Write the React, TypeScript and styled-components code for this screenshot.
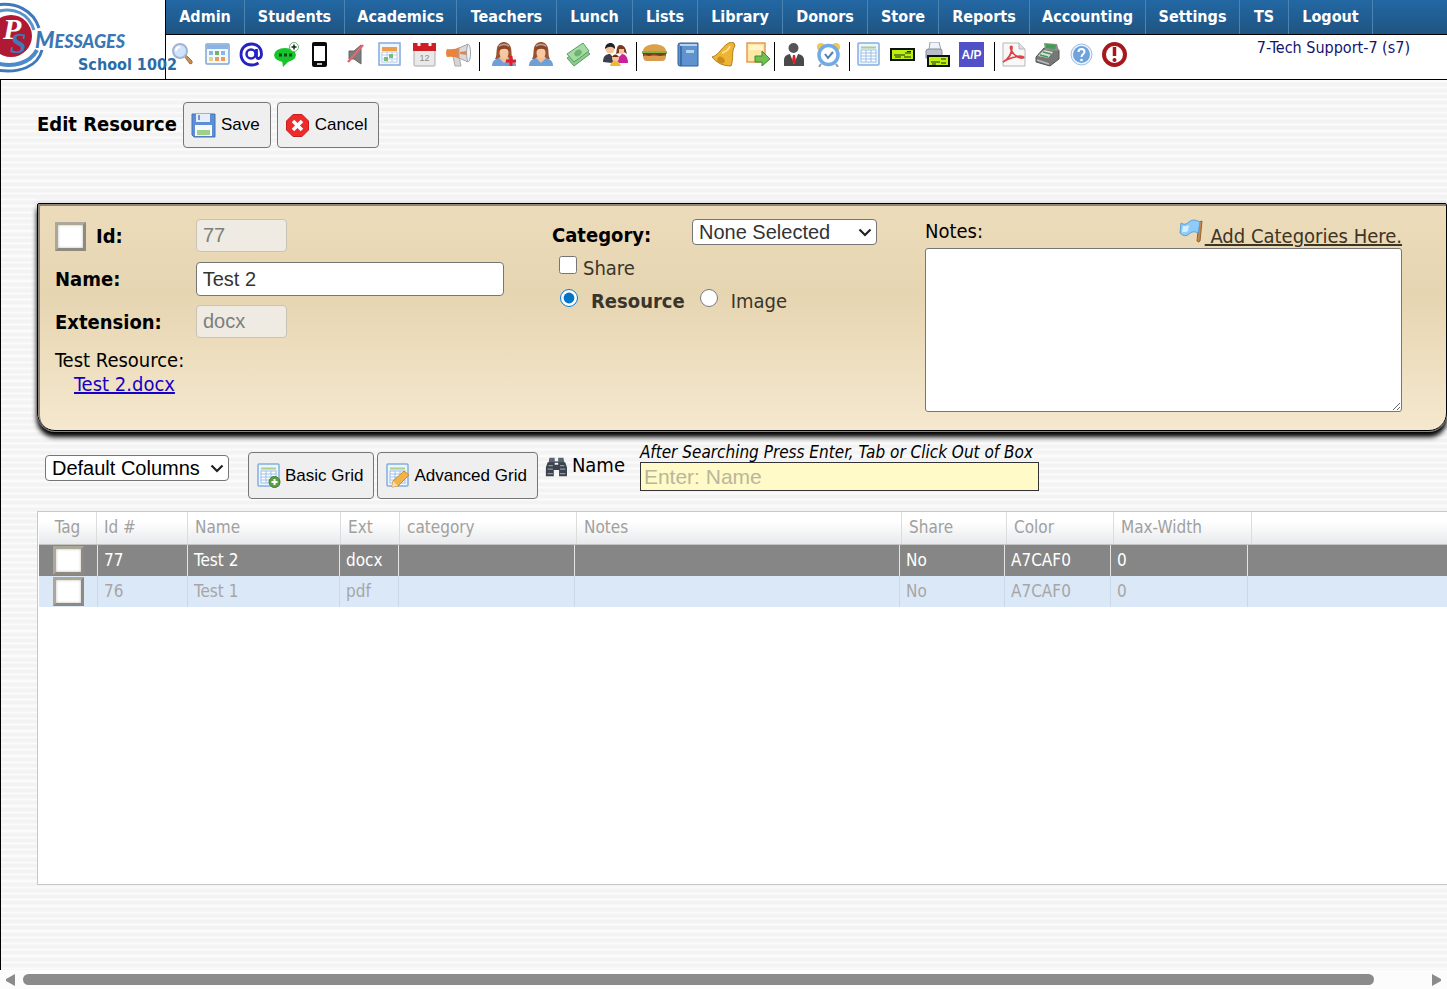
import React from "react";
import styled, { createGlobalStyle, css } from "styled-components";

const tahoma = `Tahoma, "DejaVu Sans Condensed", "DejaVu Sans", sans-serif`;
const arial = `"Liberation Sans", Arial, sans-serif`;

const GlobalStyle = createGlobalStyle`
  *, *::before, *::after { box-sizing: border-box; }
  body { margin: 0; background: #fff; color: #000; font: 20px/24px ${tahoma}; overflow-x: hidden; }
`;

/* ---------- page frame ---------- */

const Page = styled.div`
  display: flex;
  flex-direction: column;
  min-height: 100vh;
`;

const Header = styled.header`
  display: flex;
  height: 80px;
  border-bottom: 1px solid #000;
  background: #fff;
`;

const Brand = styled.div`
  position: relative;
  flex: none;
  width: 166px;
  border-right: 1px solid #000;
`;

const LogoDrawing = styled.svg`
  display: block;
  width: 165px;
  height: 79px;
`;

const SchoolName = styled.div`
  position: absolute;
  left: 78px;
  top: 54px;
  z-index: 1;
  color: #2b6ca8;
  font-size: 16px;
  font-weight: bold;
  line-height: 22px;
  white-space: nowrap;
`;

const HeaderMain = styled.div`
  flex: 1;
  min-width: 0;
`;

const Menu = styled.nav`
  display: flex;
  height: 35px;
  border-bottom: 1px solid #000;
  background: linear-gradient(#2368a4, #1f5481);
  overflow: hidden;
`;

const MenuLink = styled.a<{ $width: number }>`
  flex: none;
  width: ${(p) => p.$width}px;
  border-right: 1px solid #4c83b0;
  color: #fff;
  font-size: 16px;
  font-weight: bold;
  line-height: 34px;
  text-align: center;
  text-decoration: none;
  white-space: nowrap;
`;

const IconBar = styled.div`
  display: flex;
  height: 44px;
  padding-top: 7px;
`;

const IconGroup = styled.div<{ $width: number; $left: number; $right: number }>`
  display: flex;
  flex: none;
  justify-content: space-between;
  width: ${(p) => p.$width}px;
  height: 29px;
  padding: 0 ${(p) => p.$right}px 0 ${(p) => p.$left}px;
  & + & { border-left: 1px solid #000; }
`;

const IconButton = styled.button`
  width: 25px;
  height: 25px;
  padding: 0;
  border: 0;
  background: none;
  svg { display: block; }
`;

const UserName = styled.div`
  margin-left: auto;
  padding-right: 37px;
  color: #14146e;
  font-size: 16px;
  line-height: 12px;
  white-space: nowrap;
`;

const Content = styled.main`
  display: flex;
  flex: 1;
  flex-direction: column;
  padding: 22px 0 85px 36px;
  border-left: 1px solid #000;
  background: repeating-linear-gradient(
    #fbfbfb 0 2px, #f3f3f3 3px 6px, #fbfbfb 7px 8px, #f3f3f3 9px 12px,
    #fbfbfb 13px 14px, #f3f3f3 15px 18px, #fbfbfb 19px 20px, #f3f3f3 21px 24px, #fbfbfb 25px);
`;

/* ---------- shared controls ---------- */

const PushButton = styled.button<{ $tall?: boolean }>`
  display: flex;
  align-items: center;
  gap: ${(p) => (p.$tall ? 4 : 5)}px;
  flex: none;
  height: ${(p) => (p.$tall ? 47 : 46)}px;
  padding: 0 10px 0 7px;
  border: 1px solid #767676;
  border-radius: 4px;
  background: #efefef;
  color: #000;
  font: 17px/20px ${arial};
  white-space: nowrap;
`;

const SelectBox = styled.div<{ $width: number }>`
  position: relative;
  flex: none;
  width: ${(p) => p.$width}px;
  height: 26px;
  svg { position: absolute; right: 5px; top: 9px; pointer-events: none; }
`;

const Select = styled.select<{ $soft?: boolean }>`
  appearance: none;
  display: block;
  width: 100%;
  height: 26px;
  padding: 0 6px;
  border: 1px solid #767676;
  border-radius: 4px;
  background: #fff;
  color: ${(p) => (p.$soft ? "#333" : "#000")};
  font: 20px/24px ${arial};
`;

const TagBox = styled.input`
  appearance: none;
  flex: none;
  width: 31px;
  height: 29px;
  margin: 0;
  border: 3px solid;
  border-color: #aca797 #8e8a7f #8e8a7f #aca797;
  background: #fff;
  box-shadow: inset 0 0 3px #bbb;
`;

/* ---------- title row and form panel ---------- */

const TitleRow = styled.div`
  display: flex;
  align-items: center;
  gap: 6px;
  margin-bottom: 55px;
`;

const Title = styled.h1`
  margin: 0;
  padding-bottom: 2px;
  font-size: 20px;
  line-height: 24px;
`;

const Panel = styled.form`
  display: grid;
  grid-template-columns: 449px 325px minmax(0, 1fr);
  column-gap: 48px;
  height: 228px;
  padding: 15px 44px 0 17px;
  border: 1px solid #000;
  border-radius: 2px 2px 18px 18px;
  background: linear-gradient(#ecdcbb, #e6d5b1 40%, #f5e8ce);
  box-shadow: inset 2px 2px 0 #8d8678, 0 1px 0 #888, 0 6px 5px #000, 0 0 5px 1px #dcdce6;
`;

const Fields = styled.div`
  display: flex;
  flex-direction: column;
  gap: 9px;
`;

const Field = styled.div`
  display: flex;
  align-items: center;
  height: 34px;
`;

const FieldLabel = styled.label`
  display: flex;
  align-items: center;
  gap: 10px;
  width: 141px;
  font-weight: bold;
`;

const TextInput = styled.input<{ $width: number }>`
  width: ${(p) => p.$width}px;
  height: 34px;
  padding: 0 6px;
  border: 1px solid #767676;
  border-radius: 4px;
  background: #fff;
  color: #333;
  font: 20px/24px ${arial};
  &:disabled {
    height: 33px;
    margin-bottom: 2px;
    border-color: #c9c3b6;
    background: #efebe2;
    color: #7b7f80;
  }
`;

const TestResource = styled.div`
  a { display: block; width: max-content; margin-left: 19px; color: #1500c8; }
`;

const OptionRow = styled.div<{ $inset?: number }>`
  display: flex;
  height: 33px;
  padding-left: ${(p) => p.$inset ?? 0}px;
  line-height: 33px;
  color: #3a352b;
`;

const CategoryLabel = styled.label`
  width: 141px;
  color: #000;
  font-weight: bold;
`;

const choice = css`
  flex: none;
  width: 18px;
  height: 18px;
  margin: 4px 0 0;
  accent-color: #0075c8;
`;

const Check = styled.input`
  ${choice}
`;

const Radio = styled.input`
  ${choice}
`;

const ChoiceLabel = styled.label<{ $bold?: boolean; $gap: number }>`
  margin-left: ${(p) => p.$gap}px;
  margin-right: 15px;
  font-weight: ${(p) => (p.$bold ? "bold" : "normal")};
`;

const NotesHead = styled.div`
  display: flex;
  justify-content: space-between;
  height: 29px;
`;

const CategoryLink = styled.a`
  display: flex;
  gap: 1px;
  color: #3d3423;
  text-decoration: none;
  span { padding-top: 5px; text-decoration: underline; white-space: pre; }
`;

const Notes = styled.textarea`
  display: block;
  width: 100%;
  height: 164px;
  border: 1px solid #767676;
  border-radius: 3px;
  background: #fff;
`;

/* ---------- grid toolbar ---------- */

const GridTools = styled.div`
  display: flex;
  align-items: flex-start;
  height: 56px;
  margin: 12px 0;
  padding-left: 8px;
`;

const ColumnPicker = styled.div`
  padding: 12px 19px 0 0;
`;

const ButtonPair = styled.div`
  display: flex;
  gap: 3px;
  padding-top: 9px;
`;

const SearchLabel = styled.label`
  display: flex;
  gap: 5px;
  width: 95px;
  margin-left: 7px;
  padding-top: 10px;
  svg { margin-top: 3px; }
`;

const SearchField = styled.div`
  width: 399px;
`;

const SearchHint = styled.div`
  height: 19px;
  font-size: 17px;
  font-style: italic;
  line-height: 19px;
  white-space: nowrap;
`;

const SearchInput = styled.input`
  display: block;
  width: 100%;
  height: 29px;
  padding: 0 3px;
  border: 1px solid #333;
  background: #fffac8;
  font: 21px/24px ${arial};
  &::placeholder { color: #b9b79a; }
`;

/* ---------- data grid ---------- */

const GridFrame = styled.div`
  flex: 1;
  min-height: 374px;
  padding-left: 1px;
  border: 1px solid #c8c8c8;
  border-right: 0;
  background: #fff;
`;

const Table = styled.table`
  display: block;
  font-size: 17px;
  thead, tbody { display: block; }
`;

const HeadRow = styled.tr`
  display: grid;
  grid-template-columns: 58px 91px 153px 59px 177px 325px 105px 107px 138px minmax(0, 1fr);
  height: 33px;
  border-bottom: 1px solid #c4c4c4;
  background: linear-gradient(#fff 30%, #e8e9ec);
`;

const HeadCell = styled.th`
  padding: 0 7px;
  border-right: 1px solid #dcdcdc;
  color: #a0a0a0;
  font-weight: normal;
  line-height: 31px;
  text-align: left;
  &:first-child { text-align: center; }
  &:last-child { border-right: 0; }
`;

const BodyRow = styled.tr<{ $selected?: boolean }>`
  display: grid;
  grid-template-columns: 59px 90px 152px 59px 176px 325px 105px 106px 137px minmax(0, 1fr);
  height: 31px;
  background: ${(p) => (p.$selected ? "#868686" : "#dbe8f7")};
  color: ${(p) => (p.$selected ? "#fff" : "#a6a6a6")};
  td { border-color: ${(p) => (p.$selected ? "#e4e4e4" : "#ccd8e6")}; }
`;

const Cell = styled.td`
  padding: 0 6px;
  border-right: 1px solid;
  line-height: 31px;
  &:first-child { display: flex; justify-content: center; align-items: center; }
  &:last-child { border-right: 0; }
`;

/* ---------- bottom scroll strip ---------- */

const ScrollStrip = styled.div`
  display: flex;
  align-items: center;
  justify-content: space-between;
  height: 19px;
  padding: 0 5px;
  background: #fcfcfc;
`;

const ScrollTrack = styled.div`
  flex: 1;
  margin: 0 58px 0 8px;
  height: 11px;
  border-radius: 6px;
  background: #8b8b8b;
`;

/* ---------- drawings ---------- */

const Svg = ({ size = 25, children }: { size?: number; children: React.ReactNode }) => (
  <svg width={size} height={size} viewBox="0 0 25 25" fill="none" aria-hidden="true">{children}</svg>
);

const Chevron = () => (
  <svg width="14" height="9" viewBox="0 0 14 9" fill="none" aria-hidden="true">
    <path d="M1.500 1.500 7 7l5.500-5.500" stroke="#222" strokeWidth="2.200" />
  </svg>
);

const sheet = (
  <>
    <rect x="2" y="1" width="21" height="22" rx="1" fill="#eef5fd" stroke="#85aede" strokeWidth="1.500" />
    <path d="M5 5.500h15" stroke="#a9d18c" strokeWidth="2" />
    <rect x="5" y="8" width="15" height="12" fill="#fff" stroke="#9cbfe8" />
    <path d="M5 11h15M5 14h15M5 17h15M10 8v12M15 8v12" stroke="#9cbfe8" />
  </>
);

const check = (
  <>
    <rect x="1" y="7" width="23" height="11" fill="#b9f20d" stroke="#111" strokeWidth="2" />
    <path d="M4 13h11M15 11h6M5 15h6M14 15h7M17 9.500h4" stroke="#222" />
  </>
);

const woman = (
  <>
    <path d="M4 17C6 14 5 11 6 6c1-4 4-6 7-6s6 2 7 6c1 5 0 8 2 11z" fill="#9a5230" />
    <path d="M1 24c0-5 3-7 7-8h10c4 1 7 3 7 8z" fill="#6f9fd8" />
    <path d="m8 16 5 5 5-5-2-2h-6z" fill="#f2be93" />
    <ellipse cx="13" cy="11" rx="4.500" ry="5.500" fill="#f7c9a0" />
    <path d="M7 9c0-8 12-8 12 0-3-3-8-3-12 0z" fill="#8a4526" />
    <path d="M8 4q5-3 10 0" stroke="#b9a8a0" strokeWidth="1.500" />
  </>
);

const icons: Record<string, React.ReactNode> = {
  Search: (
    <>
      <path d="m14 14 2-1 6 6q1 3-2 3z" fill="#c98f52" stroke="#9b7350" />
      <circle cx="10" cy="9" r="7" fill="#cfe3fa" stroke="#a3b5d2" strokeWidth="2" />
      <path d="M6 9q0-4 4-4" stroke="#fff" strokeWidth="2" />
    </>
  ),
  Schedule: (
    <>
      <rect x="1" y="2" width="23" height="20" rx="1" fill="#f4f8fd" stroke="#7fa4d3" strokeWidth="1.500" />
      <path d="M2 5h21" stroke="#8bb4e6" strokeWidth="4" />
      <path d="M4 9h4v4H4zM16 9h4v4h-4z" fill="#88b6ec" />
      <path d="M10 9h4v4h-4z" fill="#72b36b" />
      <path d="M4 15h4v4H4z" fill="#d5d985" />
      <path d="M10 15h4v4h-4zM16 15h4v4h-4z" fill="#ed9b57" />
    </>
  ),
  Email: (
    <>
      <circle cx="12" cy="12" r="4.500" stroke="#2522c4" strokeWidth="2.500" />
      <path d="M17.500 7v7c0 4 5 3 5-2C22.500 5.500 18 2 12.500 2 6 2 2 6.500 2 12.500S6.500 23 12.500 23q4 0 7-2" stroke="#2522c4" strokeWidth="2.800" />
    </>
  ),
  Text: (
    <>
      <ellipse cx="11" cy="13" rx="11" ry="7" fill="#16c52b" />
      <path d="m8 18 1 7 7-7z" fill="#16c52b" />
      <path d="M5 13h3M10 13h3M15 13h3" stroke="#104716" strokeWidth="3" />
      <circle cx="20" cy="5" r="4.500" fill="#fff" stroke="#62b56a" />
      <path d="M20 2.500v5M17.500 5h5" stroke="#222" strokeWidth="1.500" />
    </>
  ),
  Phone: (
    <>
      <rect x="4" y="0" width="15" height="25" rx="2" fill="#0a0a0a" />
      <rect x="6" y="4" width="11" height="15" fill="#fff" />
      <path d="M9 22h5" stroke="#fff" strokeWidth="1.500" />
    </>
  ),
  Mute: (
    <>
      <path d="M6 9h5l7-6v19l-7-5H6z" fill="#7c7c7c" stroke="#666" />
      <path d="M5 20 20 3" stroke="#e0696d" strokeWidth="2.500" />
    </>
  ),
  Calendar: (
    <>
      <rect x="2" y="1" width="21" height="22" fill="#eef5fe" stroke="#83abdc" strokeWidth="1.500" />
      <path d="M5 5h15v4H5z" fill="#f09a4c" />
      <path d="M5 10h15v10H5z" fill="#fff" stroke="#b6cfea" />
      <path d="M5 13h15M5 17h15M10 10v10M15 10v10" stroke="#b6cfea" />
      <path d="M12 12h4v4h-4zM7 15h4v4H7z" fill="#79bd77" />
    </>
  ),
  Date: (
    <>
      <rect x="2" y="2" width="21" height="22" rx="1" fill="#e9e9e9" stroke="#a9a9a9" />
      <path d="M1 1h23v8H1z" fill="#cf1f25" />
      <path d="M7 0v4M18 0v4" stroke="#f4f4f4" strokeWidth="3" />
      <text x="12.500" y="19" textAnchor="middle" fontFamily="Liberation Sans" fontSize="9" fill="#8a8a8a">12</text>
    </>
  ),
  Announce: (
    <>
      <path d="M7 14h6l2 10h-6z" fill="#d5d5d5" stroke="#aaa" />
      <path d="M1 7q7 1 13-2v12q-6-3-13-2-2-4 0-8z" fill="#e8843f" />
      <path d="m13 6 9-4q3 9 0 18l-9-4z" fill="#d9d9de" stroke="#a2a2a8" />
      <path d="m14 10 7-1v4l-7-1z" fill="#e8843f" />
      <ellipse cx="22.500" cy="11" rx="2" ry="8.500" fill="#f2f2f2" stroke="#a2a2a8" />
    </>
  ),
  "Add person": (
    <>
      {woman}
      <path d="M20 14v10M15 19h10" stroke="#e51c23" strokeWidth="3" />
    </>
  ),
  Person: woman,
  Money: (
    <>
      <path d="m1 16 16-10 7 6-16 12z" fill="#8ccb8b" stroke="#5a9d62" />
      <path d="M1 12 17 1l6 8L8 20z" fill="#a5dba3" stroke="#5a9d62" />
      <ellipse cx="12" cy="11" rx="4" ry="3" transform="rotate(-35 12 11)" fill="#6db374" />
    </>
  ),
  Family: (
    <>
      <circle cx="7" cy="7" r="4.500" fill="#f3c59c" />
      <path d="M2 7c0-8 11-8 10 0-3-3-6-3-10 0z" fill="#222" />
      <circle cx="18" cy="8" r="4" fill="#f3c59c" />
      <path d="M13 12c1-3 0-10 5-9s5 6 6 9l-3-2V7h-5v4z" fill="#7b3a20" />
      <path d="M0 20c0-6 3-8 7-8l5 5-3 4z" fill="#3a3f4c" />
      <path d="M25 21c0-6-3-9-6-9l-6 6 3 3z" fill="#cc1f9b" />
      <circle cx="12.500" cy="16" r="3.500" fill="#f5c59a" />
      <path d="M9 15q3-5 7 0z" fill="#5d3218" />
      <path d="M7 24q1-5 5-5t6 5z" fill="#f0b731" />
    </>
  ),
  Lunch: (
    <>
      <path d="M1 9c0-9 23-9 23 0z" fill="#dca04c" />
      <path d="M0 9h25v3H0z" fill="#7db742" />
      <path d="M1 11h23v3H1z" fill="#7a3d1e" />
      <path d="m2 13 5 2 5-2 6 2 6-2" stroke="#e84c34" strokeWidth="1.500" />
      <path d="M1 14h23q0 5-4 5H5q-4 0-4-5z" fill="#d99b4d" />
    </>
  ),
  Book: (
    <>
      <path d="M2 3q0-2 2-2h18v23H4q-2 0-2-2z" fill="#5f93cf" stroke="#2f609b" />
      <path d="M5 4v20" stroke="#2f609b" strokeWidth="1.500" />
      <path d="M4 3h17" stroke="#dbe7f5" strokeWidth="1.500" />
      <rect x="10" y="8" width="8" height="3" fill="#b4d0f0" />
    </>
  ),
  Bell: (
    <>
      <path d="M1 15C9 13 11 3 20 0q4 0 4 4c-4 5-1 12-4 20Q8 24 1 15z" fill="#eeb534" stroke="#b27f1a" />
      <ellipse cx="10" cy="18" rx="4" ry="3" fill="#c88d1c" transform="rotate(35 10 18)" />
      <path d="M11 11q6-2 8-7" stroke="#fbe08d" strokeWidth="2" />
    </>
  ),
  "Send note": (
    <>
      <path d="M2 1h18v19H2z" fill="#fce7a4" stroke="#e79a55" strokeWidth="1.500" />
      <path d="M4 3h14v5H4z" fill="#fff4cd" />
      <path d="M10 14h7V9l8 8-8 7v-4h-7z" fill="#6fbf51" stroke="#3d8c2d" />
    </>
  ),
  Staff: (
    <>
      <circle cx="12.500" cy="6" r="5" fill="#555" />
      <path d="M3 24v-6q0-5 6-6l4 2 4-2q6 1 6 6v6z" fill="#4a4a4a" />
      <path d="m9 12 4 10 4-10z" fill="#fff" />
      <path d="M12 13h2l1 6-2 3-2-3z" fill="#e01f26" />
    </>
  ),
  Alarm: (
    <>
      <circle cx="5" cy="5" r="4" fill="#f2c756" />
      <circle cx="20" cy="5" r="4" fill="#f2c756" />
      <circle cx="12.500" cy="13" r="9.500" fill="#fff" stroke="#70abe5" strokeWidth="3.500" />
      <path d="m9 12 3 4 5-6" stroke="#4e7fb5" strokeWidth="2" />
      <path d="m5 22-2 3M20 22l2 3" stroke="#999" strokeWidth="2" />
    </>
  ),
  Report: sheet,
  Check: check,
  "Print check": (
    <>
      <path d="M5 0h9l2 8H4z" fill="#f0f4fa" stroke="#95a0b0" />
      <path d="M1 9q0-2 3-2h11q2 0 2 2v7H1z" fill="#b9bec8" stroke="#858b96" />
      <rect x="3" y="14" width="21" height="10" fill="#b9f20d" stroke="#111" strokeWidth="2" />
      <path d="M6 20h9M16 17h5M7 22h4M16 21h5" stroke="#222" />
    </>
  ),
  Payable: (
    <>
      <path d="M0 0h25v25H0z" fill="#5250c8" />
      <text x="12.500" y="17" textAnchor="middle" fontFamily="Liberation Sans" fontWeight="bold" fontSize="12" fill="#fff">A/P</text>
    </>
  ),
  PDF: (
    <>
      <path d="M2 1h16l6 6v17H2z" fill="#f8f8f8" stroke="#b7b7b7" />
      <path d="M18 1v6h6" fill="#ddd" stroke="#b7b7b7" />
      <path d="M2 20q9-5 9-15c-3-3-2 8 9 11 6 0 1-3-6-1q-8 2-12 5z" stroke="#dc4343" strokeWidth="1.800" />
    </>
  ),
  Register: (
    <>
      <path d="m1 15 8-9 15 2v9l-9 7-14-4z" fill="#777" stroke="#555" />
      <path d="m9 1 13 1 2 7-14-1z" fill="#8c9088" />
      <path d="m11 2 10 1-1 4-9-1z" fill="#3e9e51" />
      <path d="m3 14 6-6 9 2-5 6z" fill="#d8ddd8" />
      <path d="m5 13 8 2M8 10l8 2" stroke="#429657" strokeWidth="1.500" />
      <path d="m2 18 12 4" stroke="#bbb" strokeWidth="1.500" />
    </>
  ),
  Help: (
    <>
      <circle cx="13.500" cy="12.500" r="10.500" fill="#eef4fb" stroke="#9ebde0" />
      <circle cx="13.500" cy="12.500" r="8.500" fill="#6fa3dc" />
      <path d="M10.500 10q0-3 3-3t3 3c0 2-3 2-3 5" stroke="#fff" strokeWidth="2" />
      <circle cx="13.500" cy="18" r="1.300" fill="#fff" />
    </>
  ),
  Alert: (
    <>
      <circle cx="12.500" cy="12.500" r="10.500" fill="#fff" stroke="#a5191d" strokeWidth="4" />
      <path d="M12.500 5v9" stroke="#a5191d" strokeWidth="3.500" />
      <circle cx="12.500" cy="18" r="2" fill="#a5191d" />
    </>
  ),
};

const Logo = () => (
  <LogoDrawing viewBox="0 0 165 79" fill="none" aria-label="PS Messages">
    <path d="M-4 5C16 2 33 10 39 28" stroke="#3f79bb" strokeWidth="3" />
    <path d="M-4 12C14 6 29 14 34 30" stroke="#5b93cb" strokeWidth="3" />
    <path d="M-4 70C20 74 38 66 42 50" stroke="#3f79bb" strokeWidth="3" />
    <path d="M-4 63C14 68 30 63 37 50" stroke="#4d8ac6" strokeWidth="4" />
    <circle cx="11" cy="36" r="21" fill="#b01934" />
    <text x="3" y="39" fontFamily="Liberation Serif" fontStyle="italic" fontWeight="bold" fontSize="30" fill="#fff">
      P<tspan x="10" y="53" fill="#3f79bb">S</tspan>
    </text>
    <text x="35" y="48" fontFamily="Lato" fontStyle="italic" fontWeight="900" fontSize="22" fill="#3b76b5">
      M<tspan fontSize="18">ESSAGES</tspan>
    </text>
  </LogoDrawing>
);

const SaveIcon = () => (
  <Svg>
    <path d="M1 1h23v23H3l-2-2z" fill="#5d8fd6" stroke="#4670b4" />
    <path d="M5 1h14v8H5z" fill="#e6eefa" />
    <path d="M8 2v5" stroke="#7397d0" strokeWidth="2" />
    <path d="M4 12h17v11H4z" fill="#f5f9fd" />
    <path d="M6 17h13v5H6z" fill="#9fd086" />
  </Svg>
);

const CancelIcon = () => (
  <Svg>
    <path d="M8 1.500h9l6.500 6.500v9L17 23.500H8L1.500 17V8z" fill="#ee2a2a" stroke="#c81d1d" />
    <path d="m8 8 9 9M17 8l-9 9" stroke="#fff" strokeWidth="3.500" />
  </Svg>
);

const BasicIcon = () => (
  <Svg>
    {sheet}
    <circle cx="18.500" cy="19" r="5.500" fill="#5ba045" stroke="#3f7d30" />
    <path d="M18.500 16v6M15.500 19h6" stroke="#fff" strokeWidth="2" />
  </Svg>
);

const AdvancedIcon = () => (
  <Svg>
    {sheet}
    <path d="m8 18 11-10 5 4-11 11-6 1z" fill="#f3b445" stroke="#cf8a2a" />
    <path d="m8 18 5 5-6 1z" fill="#f6dcb5" />
  </Svg>
);

const FlagIcon = () => (
  <Svg>
    <path d="m20 3 3-1-2 20q-2 2-3 0z" fill="#c58746" stroke="#96632f" />
    <path d="M2 4q4 3 8-1t11 0l-2 11q-5-3-9 1t-9-1z" fill="#8ecbf7" stroke="#5ba0dc" />
    <path d="M4 7q3 1 6-1l-1 6q-3 2-6 1z" fill="#d6effe" />
  </Svg>
);

const Binoculars = () => (
  <Svg size={22}>
    <path d="M5 2h6v4h4V2h6l1 6H4z" fill="#5a636e" />
    <path d="M3 7h8v3h4V7h8l2 6v10h-9v-7h-6v7H1V13z" fill="#3c434c" />
    <path d="M4 11h5M3 15h6M3 20h6M17 11h5M17 15h6M17 20h6" stroke="#8d99a8" strokeWidth="1.500" />
  </Svg>
);

/* ---------- data ---------- */

const menu: [string, number][] = [
  ["Admin", 79], ["Students", 100], ["Academics", 112], ["Teachers", 100], ["Lunch", 76],
  ["Lists", 65], ["Library", 85], ["Donors", 85], ["Store", 71], ["Reports", 91],
  ["Accounting", 116], ["Settings", 94], ["TS", 49], ["Logout", 84],
];

const groups = [
  { width: 313, left: 4, right: 8, names: ["Search", "Schedule", "Email", "Text", "Phone", "Mute", "Calendar", "Date", "Announce"] },
  { width: 157, left: 11, right: 8, names: ["Add person", "Person", "Money", "Family"] },
  { width: 138, left: 5, right: 4, names: ["Lunch", "Book", "Bell", "Send note"] },
  { width: 75, left: 6, right: 8, names: ["Staff", "Alarm"] },
  { width: 145, left: 6, right: 10, names: ["Report", "Check", "Print check", "Payable"] },
  { width: 134, left: 6, right: 1, names: ["PDF", "Register", "Help", "Alert"] },
];

const columns = ["Tag", "Id #", "Name", "Ext", "category", "Notes", "Share", "Color", "Max-Width", ""];
const rows = [
  ["77", "Test 2", "docx", "", "", "No", "A7CAF0", "0", ""],
  ["76", "Test 1", "pdf", "", "", "No", "A7CAF0", "0", ""],
];

export default function App() {
  return (
    <>
      <GlobalStyle />
      <Page>
        <Header>
          <Brand>
            <Logo />
            <SchoolName>School 1002</SchoolName>
          </Brand>
          <HeaderMain>
            <Menu>
              {menu.map(([name, width]) => (
                <MenuLink key={name} href="#" $width={width}>{name}</MenuLink>
              ))}
            </Menu>
            <IconBar>
              {groups.map((g) => (
                <IconGroup key={g.names[0]} $width={g.width} $left={g.left} $right={g.right}>
                  {g.names.map((name) => (
                    <IconButton key={name} type="button" aria-label={name}>
                      <Svg>{icons[name]}</Svg>
                    </IconButton>
                  ))}
                </IconGroup>
              ))}
              <UserName>7-Tech Support-7 (s7)</UserName>
            </IconBar>
          </HeaderMain>
        </Header>

        <Content>
          <TitleRow>
            <Title>Edit Resource</Title>
            <PushButton type="button"><SaveIcon />Save</PushButton>
            <PushButton type="button"><CancelIcon />Cancel</PushButton>
          </TitleRow>

          <Panel>
            <Fields>
              <Field>
                <FieldLabel htmlFor="rid">
                  <TagBox type="checkbox" aria-label="Tag this resource" />
                  Id:
                </FieldLabel>
                <TextInput id="rid" $width={91} defaultValue="77" disabled />
              </Field>
              <Field>
                <FieldLabel htmlFor="rname">Name:</FieldLabel>
                <TextInput id="rname" $width={309} defaultValue="Test 2" />
              </Field>
              <Field>
                <FieldLabel htmlFor="rext">Extension:</FieldLabel>
                <TextInput id="rext" $width={91} defaultValue="docx" disabled />
              </Field>
              <TestResource>
                Test Resource:
                <a href="#">Test 2.docx</a>
              </TestResource>
            </Fields>

            <div>
              <OptionRow>
                <CategoryLabel htmlFor="cat">Category:</CategoryLabel>
                <SelectBox $width={185}>
                  <Select id="cat" $soft><option>None Selected</option></Select>
                  <Chevron />
                </SelectBox>
              </OptionRow>
              <OptionRow $inset={7}>
                <Check id="share" type="checkbox" />
                <ChoiceLabel htmlFor="share" $gap={6}>Share</ChoiceLabel>
              </OptionRow>
              <OptionRow $inset={8}>
                <Radio id="kind-resource" type="radio" name="kind" defaultChecked />
                <ChoiceLabel htmlFor="kind-resource" $gap={13} $bold>Resource</ChoiceLabel>
                <Radio id="kind-image" type="radio" name="kind" />
                <ChoiceLabel htmlFor="kind-image" $gap={13}>Image</ChoiceLabel>
              </OptionRow>
            </div>

            <div>
              <NotesHead>
                <label htmlFor="notes">Notes:</label>
                <CategoryLink href="#"><FlagIcon /><span> Add Categories Here.</span></CategoryLink>
              </NotesHead>
              <Notes id="notes" />
            </div>
          </Panel>

          <GridTools>
            <ColumnPicker>
              <SelectBox $width={184}>
                <Select aria-label="Columns"><option>Default Columns</option></Select>
                <Chevron />
              </SelectBox>
            </ColumnPicker>
            <ButtonPair>
              <PushButton type="button" $tall><BasicIcon />Basic Grid</PushButton>
              <PushButton type="button" $tall><AdvancedIcon />Advanced Grid</PushButton>
            </ButtonPair>
            <SearchLabel htmlFor="search"><Binoculars />Name</SearchLabel>
            <SearchField>
              <SearchHint>After Searching Press Enter, Tab or Click Out of Box</SearchHint>
              <SearchInput id="search" placeholder="Enter: Name" />
            </SearchField>
          </GridTools>

          <GridFrame>
            <Table>
              <thead>
                <HeadRow>
                  {columns.map((c) => <HeadCell key={c}>{c}</HeadCell>)}
                </HeadRow>
              </thead>
              <tbody>
                {rows.map((r, i) => (
                  <BodyRow key={r[0]} $selected={i === 0}>
                    <Cell><TagBox type="checkbox" aria-label={`Tag ${r[1]}`} /></Cell>
                    {r.map((value, n) => <Cell key={n}>{value}</Cell>)}
                  </BodyRow>
                ))}
              </tbody>
            </Table>
          </GridFrame>
        </Content>

        <ScrollStrip aria-hidden="true">
          <svg width="10" height="12" viewBox="0 0 10 12"><path d="M10 0v12L1 7V5z" fill="#8b8b8b" /></svg>
          <ScrollTrack />
          <svg width="10" height="12" viewBox="0 0 10 12"><path d="M0 0v12l9-5V5z" fill="#8b8b8b" /></svg>
        </ScrollStrip>
      </Page>
    </>
  );
}
